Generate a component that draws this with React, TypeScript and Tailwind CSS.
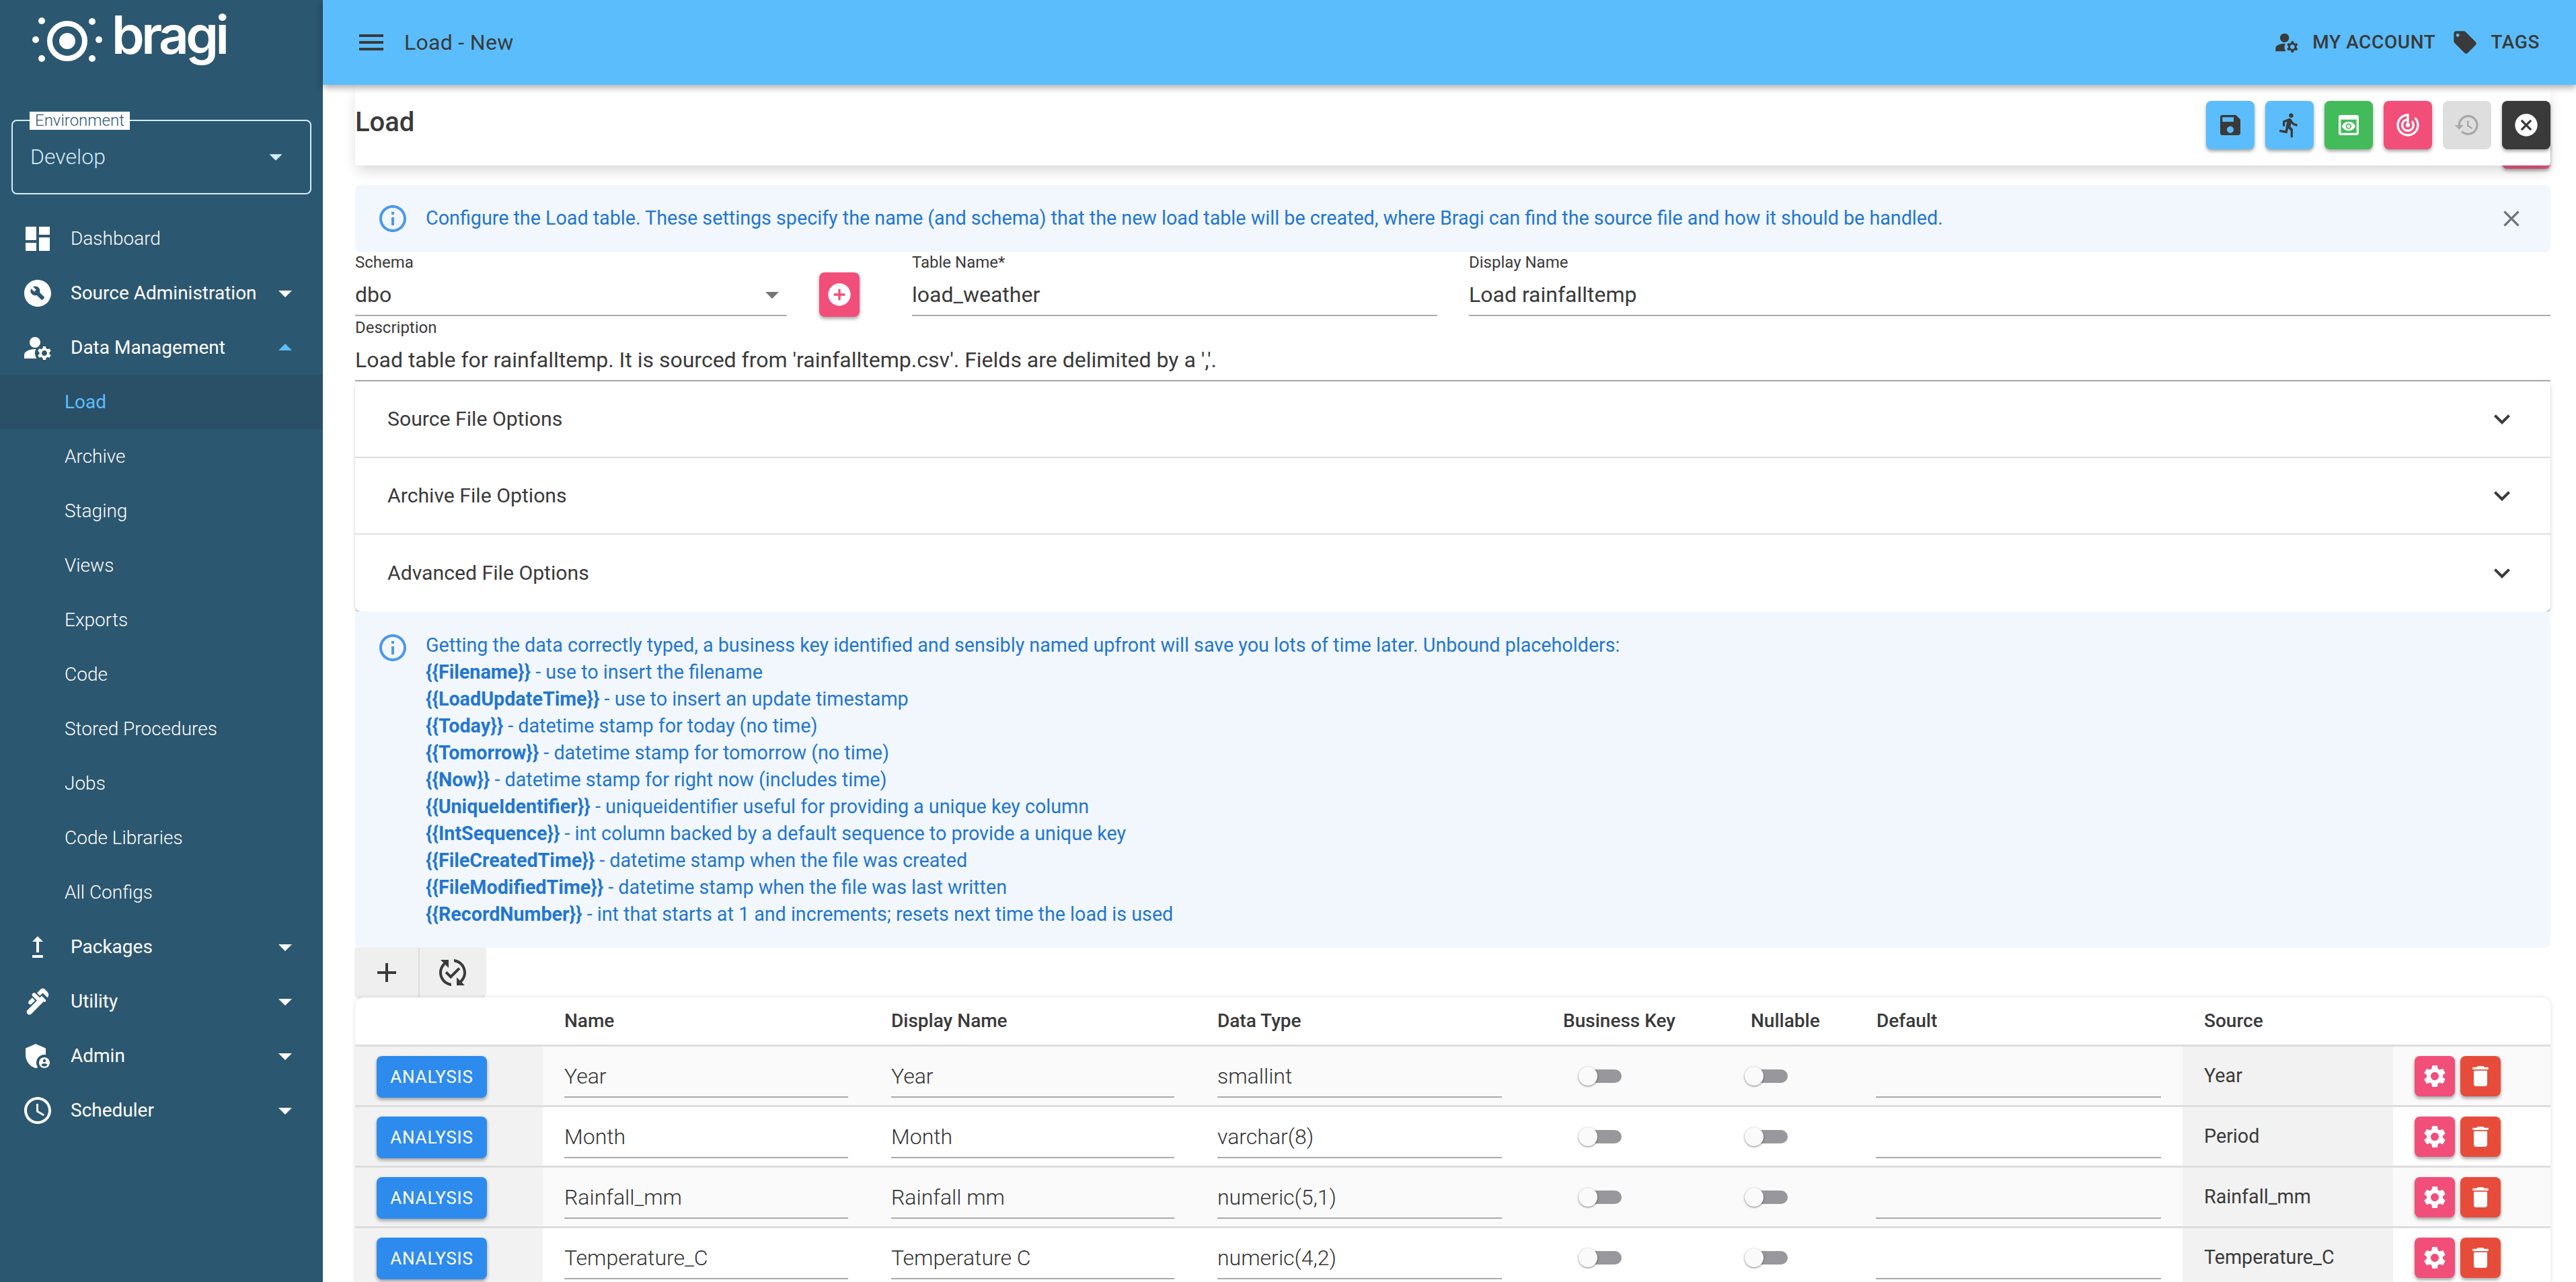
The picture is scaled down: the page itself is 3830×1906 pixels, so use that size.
import type { ReactNode } from "react";
import {
  MdAccessTime,
  MdAdd,
  MdAddCircle,
  MdAdminPanelSettings,
  MdArrowDropDown,
  MdArrowDropUp,
  MdBuildCircle,
  MdCancel,
  MdClose,
  MdDashboard,
  MdDelete,
  MdDirectionsRun,
  MdExpandMore,
  MdHistory,
  MdInfoOutline,
  MdLocalOffer,
  MdManageAccounts,
  MdMenu,
  MdPlumbing,
  MdPreview,
  MdPublishedWithChanges,
  MdSave,
  MdSettings,
  MdTrackChanges,
  MdUpgrade,
} from "react-icons/md";

const GRID = "grid grid-cols-[279px_486px_485px_487px_307px_185px_488px_313px_234px]";

const subItems = ["Load", "Archive", "Staging", "Views", "Exports", "Code", "Stored Procedures", "Jobs", "Code Libraries", "All Configs"];

const placeholders: [string, string][] = [
  ["{{Filename}}", " - use to insert the filename"],
  ["{{LoadUpdateTime}}", " - use to insert an update timestamp"],
  ["{{Today}}", " - datetime stamp for today (no time)"],
  ["{{Tomorrow}}", " - datetime stamp for tomorrow (no time)"],
  ["{{Now}}", " - datetime stamp for right now (includes time)"],
  ["{{UniqueIdentifier}}", " - uniqueidentifier useful for providing a unique key column"],
  ["{{IntSequence}}", " - int column backed by a default sequence to provide a unique key"],
  ["{{FileCreatedTime}}", " - datetime stamp when the file was created"],
  ["{{FileModifiedTime}}", " - datetime stamp when the file was last written"],
  ["{{RecordNumber}}", " - int that starts at 1 and increments; resets next time the load is used"],
];

const rows = [
  { name: "Year", display: "Year", type: "smallint", source: "Year" },
  { name: "Month", display: "Month", type: "varchar(8)", source: "Period" },
  { name: "Rainfall_mm", display: "Rainfall mm", type: "numeric(5,1)", source: "Rainfall_mm" },
  { name: "Temperature_C", display: "Temperature C", type: "numeric(4,2)", source: "Temperature_C" },
];

function Logo() {
  return (
    <div className="relative h-[178px] w-full shrink-0">
      <svg className="absolute left-[48px] top-[26px] h-[70px] w-[104px]" viewBox="48 26 104 70" fill="#fff">
        <circle cx="100" cy="61" r="26" fill="none" stroke="#fff" strokeWidth="8" />
        <circle cx="100" cy="61" r="12" />
        <circle cx="62" cy="31" r="5" />
        <circle cx="137" cy="32" r="5" />
        <circle cx="53" cy="59" r="5" />
        <circle cx="147" cy="59" r="5" />
        <circle cx="62" cy="87" r="5" />
        <circle cx="137" cy="87" r="5" />
      </svg>
      <span className="absolute left-[166px] top-[5px] text-[78px] leading-[94px] font-semibold tracking-[-4.5px] text-white [font-family:Inter,sans-serif]">
        bragi
      </span>
    </div>
  );
}

function NavItem({ icon, label, caret, medium }: { icon: ReactNode; label: string; caret?: "up" | "down"; medium?: boolean }) {
  return (
    <div className="flex h-[81px] items-center pl-[32px] pr-[32px] text-white">
      <span className="flex w-[48px] shrink-0 justify-center">{icon}</span>
      <span className={`ml-[25px] text-[28px] ${medium ? "font-normal" : "font-light"}`}>{label}</span>
      {caret === "down" && <MdArrowDropDown className="ml-auto" size={48} />}
      {caret === "up" && <MdArrowDropUp className="ml-auto text-[#5bbdfb]" size={48} />}
    </div>
  );
}

function Sidebar() {
  return (
    <aside className="flex w-[480px] shrink-0 flex-col bg-[#2c5770]">
      <Logo />
      <div className="relative mx-[17px] h-[111px] rounded-[8px] border-2 border-[#d3ecfb]">
        <span className="absolute -top-[14px] left-[25px] bg-white px-[8px] text-[24px] leading-[27px] font-light text-[#2c5770]">
          Environment
        </span>
        <div className="flex h-[107px] items-start pl-[26px] pr-[28px] pt-[34px] text-[#d3ecfb]">
          <span className="text-[32px] leading-[38px] font-light">Develop</span>
          <MdArrowDropDown className="ml-auto -mt-[4px]" size={46} />
        </div>
      </div>
      <nav className="mt-[25px]">
        <NavItem icon={<MdDashboard size={48} />} label="Dashboard" />
        <NavItem icon={<MdBuildCircle size={48} />} label="Source Administration" caret="down" medium />
        <NavItem icon={<MdManageAccounts size={48} />} label="Data Management" caret="up" medium />
        {subItems.map((s, i) => (
          <div
            key={s}
            className={`flex h-[81px] items-center pl-[96px] text-[28px] font-light ${i === 0 ? "bg-[#2a5068] font-normal text-[#5bbdfb]" : "text-white"}`}
          >
            {s}
          </div>
        ))}
        <NavItem icon={<MdUpgrade size={48} />} label="Packages" caret="down" medium />
        <NavItem icon={<MdPlumbing size={48} />} label="Utility" caret="down" medium />
        <NavItem icon={<MdAdminPanelSettings size={48} />} label="Admin" caret="down" medium />
        <NavItem icon={<MdAccessTime size={48} />} label="Scheduler" caret="down" medium />
      </nav>
    </aside>
  );
}

function TopBar() {
  return (
    <header className="relative z-20 flex h-[126px] shrink-0 items-center bg-[#5bbdfb] pl-[48px] pr-[54px] text-[#3a3a3a] shadow-[0_4px_10px_rgba(0,0,0,0.35)]">
      <MdMenu size={48} />
      <span className="ml-[25px] text-[32px] tracking-[0.3px]">Load - New</span>
      <div className="ml-auto flex items-center text-[28px] font-medium tracking-[0.6px]">
        <MdManageAccounts size={40} />
        <span className="ml-[18px]">MY ACCOUNT</span>
        <MdLocalOffer className="ml-[24px]" size={40} />
        <span className="ml-[18px]">TAGS</span>
      </div>
    </header>
  );
}

function ActionButton({ className, children }: { className: string; children: ReactNode }) {
  return (
    <button className={`flex h-[72px] w-[72px] items-center justify-center rounded-[8px] ${className}`}>{children}</button>
  );
}

const raised = "shadow-[0_3px_5px_rgba(0,0,0,0.35)]";

function TitleCard() {
  return (
    <div className="relative shrink-0">
      <div className={`absolute bottom-[-5px] right-0 h-[40px] w-[72px] rounded-[8px] bg-[#e05580] ${raised}`} />
      <div className="relative flex h-[120px] items-start rounded-b-[4px] bg-white shadow-[0_10px_20px_-4px_rgba(0,0,0,0.18)]">
        <h1 className="mt-[32px] text-[40px] leading-[48px] font-medium">Load</h1>
        <div className="ml-auto mt-[24px] flex gap-[16px]">
          <ActionButton className={`bg-[#5bbdfb] text-[#3a3a3a] ${raised}`}><MdSave size={40} /></ActionButton>
          <ActionButton className={`bg-[#5bbdfb] text-[#3a3a3a] ${raised}`}><MdDirectionsRun size={40} /></ActionButton>
          <ActionButton className={`bg-[#44bb5a] text-white ${raised}`}><MdPreview size={40} /></ActionButton>
          <ActionButton className={`bg-[#f24e7a] text-white ${raised}`}><MdTrackChanges size={40} /></ActionButton>
          <ActionButton className="bg-[#dedede] text-[#a8a8a8]"><MdHistory size={40} /></ActionButton>
          <ActionButton className={`bg-[#3a3a3a] text-white ${raised}`}><MdCancel size={40} /></ActionButton>
        </div>
      </div>
    </div>
  );
}

function Field({ label, value, className, caret }: { label: string; value: string; className: string; caret?: boolean }) {
  return (
    <div className={className}>
      <div className="flex h-[30px] items-center text-[24px] text-[#3a3a3a]">{label}</div>
      <div className="flex h-[65px] items-center border-b-2 border-[#aaa] pt-[2px] text-[32px]">
        <span>{value}</span>
        {caret && <MdArrowDropDown className="ml-auto mr-[-2px] text-[#757575]" size={48} />}
      </div>
    </div>
  );
}

function FormFields() {
  return (
    <div className="shrink-0">
      <div className="flex items-start">
        <Field label="Schema" value="dbo" className="w-[642px]" caret />
        <button className={`ml-[48px] mt-[30px] flex h-[66px] w-[60px] items-center justify-center rounded-[8px] bg-[#f24e7a] text-white ${raised}`}>
          <MdAddCircle size={40} />
        </button>
        <Field label="Table Name*" value="load_weather" className="ml-[78px] w-[781px]" />
        <Field label="Display Name" value="Load rainfalltemp" className="ml-[47px] flex-1" />
      </div>
      <Field label="Description" value="Load table for rainfalltemp. It is sourced from 'rainfalltemp.csv'. Fields are delimited by a ','." className="mt-[1px]" />
    </div>
  );
}

function AccordionRow({ label, last }: { label: string; last?: boolean }) {
  return (
    <div className={`flex h-[114px] items-center pl-[48px] pr-[48px] text-[30.2px] ${last ? "h-[113px]" : "border-b-2 border-[#ddd]"}`}>
      {label}
      <MdExpandMore className="ml-auto" size={48} />
    </div>
  );
}

function Switch({ className }: { className: string }) {
  return (
    <div className={`relative h-[28px] w-[64px] ${className}`}>
      <div className="absolute left-[3px] top-[4px] h-[20px] w-[61px] rounded-[10px] bg-[#98989c]" />
      <div className="absolute left-0 top-0 h-[28px] w-[28px] rounded-full bg-[#fafafa] shadow-[0_1px_3px_rgba(0,0,0,0.5)]" />
    </div>
  );
}

function CellInput({ value }: { value: string }) {
  return (
    <div className="mx-[32px] flex h-[62px] items-center border-b-2 border-[#aaa] text-[32px] font-light text-[#333]">{value}</div>
  );
}

function FieldTable() {
  return (
    <div className="flex-1 rounded-t-[12px] bg-white shadow-[0_0_6px_rgba(0,0,0,0.12)]">
      <div className={`${GRID} h-[73px] items-center border-b-[3px] border-[#ddd] text-[28px] font-medium`}>
        <div />
        <div className="pl-[32px]">Name</div>
        <div className="pl-[32px]">Display Name</div>
        <div className="pl-[32px]">Data Type</div>
        <div className="pl-[59px]">Business Key</div>
        <div className="pl-[31px]">Nullable</div>
        <div className="pl-[33px]">Default</div>
        <div className="pl-[32px]">Source</div>
        <div />
      </div>
      {rows.map((r, i) => (
        <div key={r.name} className={`${GRID} h-[90px] border-b-[3px] border-[#ddd] ${i % 2 === 0 ? "bg-[#fafafa]" : "bg-white"}`}>
          <div className="bg-[#f2f2f2] pl-[32px] pt-[14px]">
            <button className={`h-[62px] w-[164px] rounded-[8px] bg-[#2e8bee] text-[26px] font-normal tracking-[0.8px] text-white ${raised}`}>
              ANALYSIS
            </button>
          </div>
          <div className="pt-[14px]"><CellInput value={r.name} /></div>
          <div className="pt-[14px]"><CellInput value={r.display} /></div>
          <div className="pt-[14px]"><CellInput value={r.type} /></div>
          <div className="flex items-center"><Switch className="ml-[82px]" /></div>
          <div className="flex items-center"><Switch className="ml-[22px]" /></div>
          <div className="pt-[14px]"><CellInput value="" /></div>
          <div className="flex items-center bg-[#f2f2f2] pl-[32px] text-[28.7px]">{r.source}</div>
          <div className="flex gap-[8px] pl-[32px] pt-[14px]">
            <button className={`flex h-[60px] w-[60px] items-center justify-center rounded-[8px] bg-[#f24e7a] text-white ${raised}`}>
              <MdSettings size={40} />
            </button>
            <button className={`flex h-[60px] w-[60px] items-center justify-center rounded-[8px] bg-[#e74c3a] text-white ${raised}`}>
              <MdDelete size={40} />
            </button>
          </div>
        </div>
      ))}
    </div>
  );
}

export default function App() {
  return (
    <div className="flex h-[1906px] w-[3830px] overflow-hidden bg-white text-[#3a3a3a] [font-family:Roboto,sans-serif]">
      <Sidebar />
      <main className="flex min-w-0 flex-1 flex-col">
        <TopBar />
        <div className="flex min-h-0 flex-1 flex-col pl-[48px] pr-[38px]">
          <TitleCard />
          <div className="mt-[29px] flex h-[100px] shrink-0 items-center rounded-[8px] bg-[#f2f7fe] pl-[32px] pr-[38px] text-[28.7px] text-[#2276d2]">
            <MdInfoOutline className="shrink-0 text-[#4b98ee]" size={48} />
            <span className="ml-[25px]">
              Configure the Load table. These settings specify the name (and schema) that the new load table will be created, where Bragi can find the source file and how it should be handled.
            </span>
            <MdClose className="ml-auto text-[#70757a]" size={40} />
          </div>
          <FormFields />
          <div className="shrink-0 rounded-[8px] bg-white text-[#3a3a3a] shadow-[0_4px_2px_-2px_rgba(0,0,0,0.25),0_2px_2px_0_rgba(0,0,0,0.16),0_2px_6px_0_rgba(0,0,0,0.12)]">
            <AccordionRow label="Source File Options" />
            <AccordionRow label="Archive File Options" />
            <AccordionRow label="Advanced File Options" last />
          </div>
          <div className="flex h-[500px] shrink-0 rounded-b-[8px] bg-[#f2f7fe] pl-[32px] pt-[30px] text-[28.7px] leading-[40px] text-[#2276d2]">
            <MdInfoOutline className="shrink-0 text-[#4b98ee]" size={48} />
            <div className="ml-[25px]">
              <div>Getting the data correctly typed, a business key identified and sensibly named upfront will save you lots of time later. Unbound placeholders:</div>
              {placeholders.map(([k, v]) => (
                <div key={k}><b className="font-bold">{k}</b>{v}</div>
              ))}
            </div>
          </div>
          <div className="flex h-[74px] w-[194px] shrink-0 rounded-b-[8px] bg-[#efefef] shadow-[0_1px_2px_rgba(0,0,0,0.2)]">
            <div className="flex w-[96px] items-center justify-center border-r-2 border-[#ddd]"><MdAdd size={48} /></div>
            <div className="flex flex-1 items-center justify-center"><MdPublishedWithChanges size={48} /></div>
          </div>
          <FieldTable />
        </div>
      </main>
    </div>
  );
}
